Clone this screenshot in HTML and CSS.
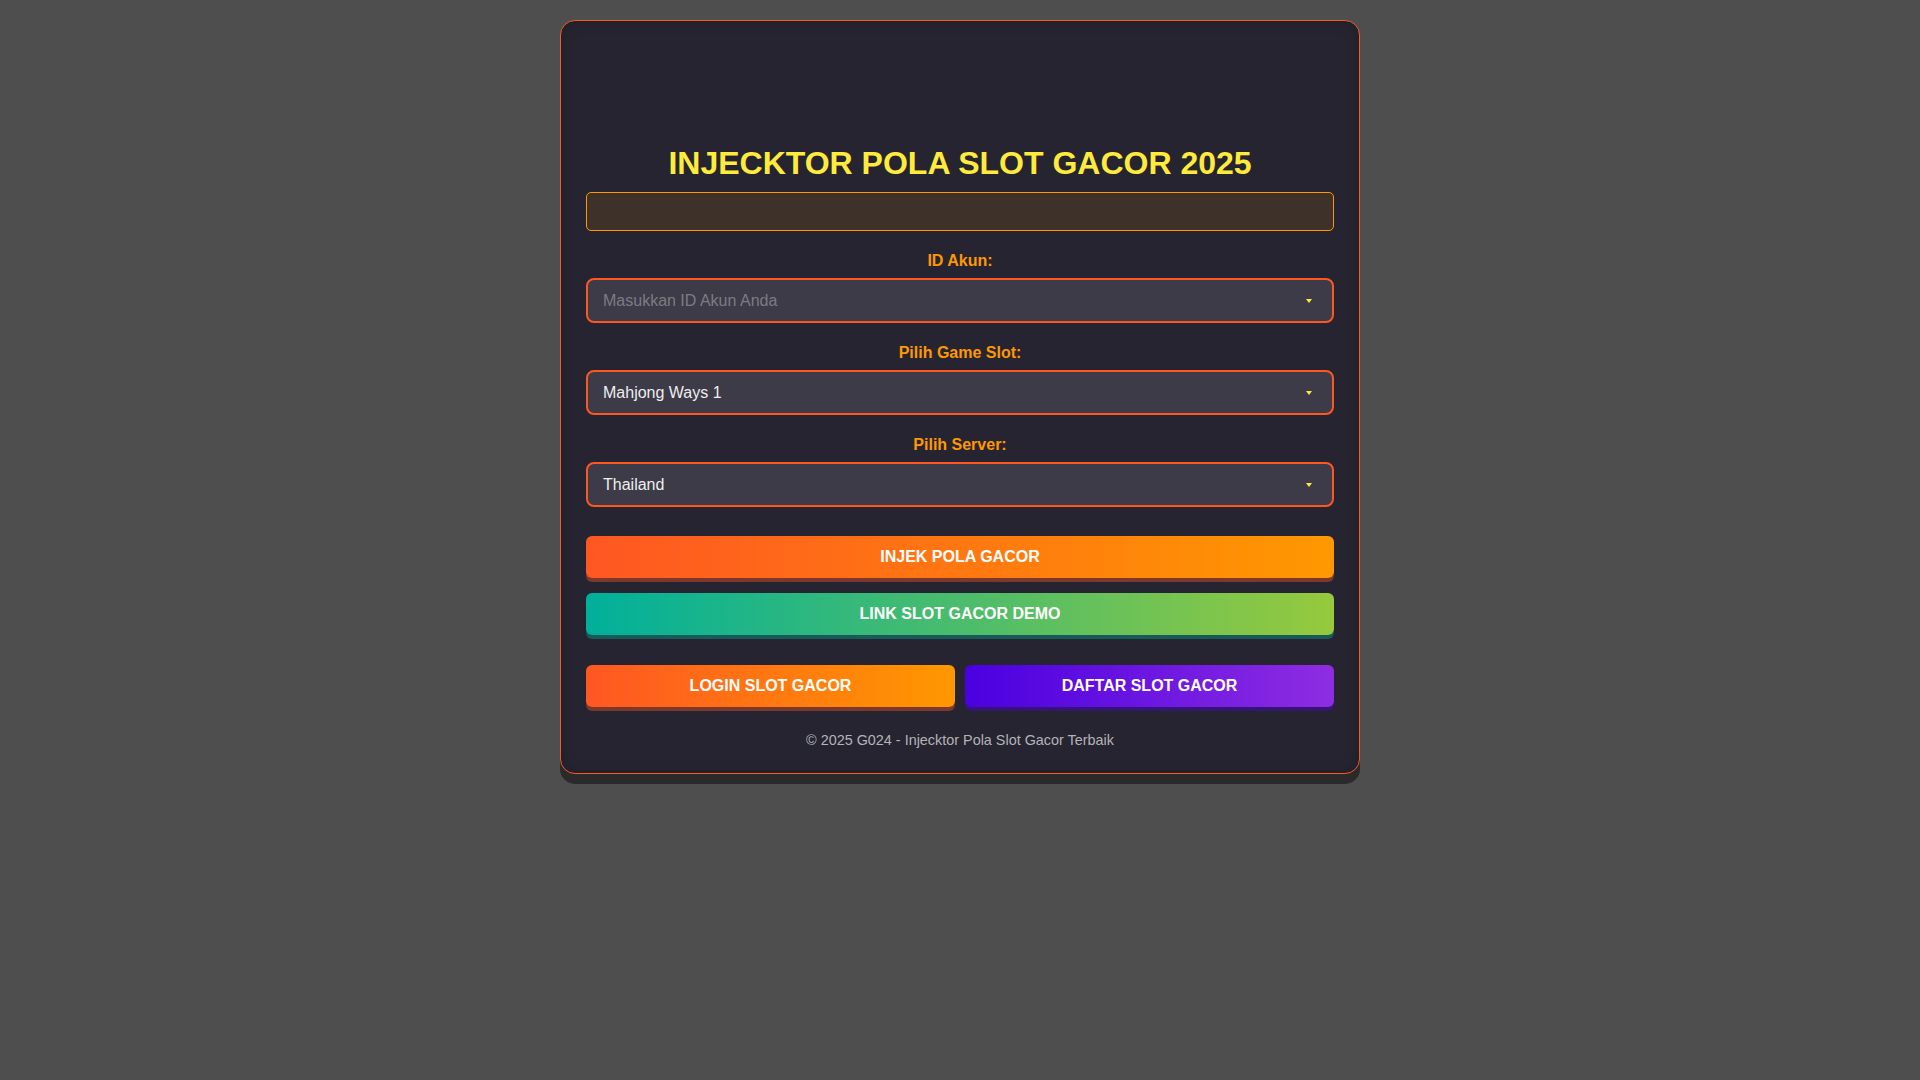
FILE: index.html
```html
<!DOCTYPE html>
<html lang="id">
<head>
<meta charset="utf-8">
<title>Injecktor Pola Slot Gacor 2025</title>
<link rel="stylesheet" href="styles.css">
</head>
<body>
<div class="page">
  <main class="card">
    <div class="logo-space"></div>
    <h1 class="title">INJECKTOR POLA SLOT GACOR 2025</h1>
    <div class="notice"></div>

    <div class="group">
      <label class="label" for="idakun">ID Akun:</label>
      <div class="field">
        <input class="control" id="idakun" type="text" placeholder="Masukkan ID Akun Anda">
      </div>
    </div>

    <div class="group">
      <label class="label" for="game">Pilih Game Slot:</label>
      <div class="field">
        <select class="control" id="game">
          <option>Mahjong Ways 1</option>
        </select>
      </div>
    </div>

    <div class="group">
      <label class="label" for="server">Pilih Server:</label>
      <div class="field">
        <select class="control" id="server">
          <option>Thailand</option>
        </select>
      </div>
    </div>

    <button class="btn btn-orange btn-first" type="button">INJEK POLA GACOR</button>
    <button class="btn btn-green btn-second" type="button">LINK SLOT GACOR DEMO</button>

    <div class="btn-row">
      <button class="btn btn-orange" type="button">LOGIN SLOT GACOR</button>
      <button class="btn btn-purple" type="button">DAFTAR SLOT GACOR</button>
    </div>

    <p class="footer">© 2025 G024 - Injecktor Pola Slot Gacor Terbaik</p>
  </main>
</div>
</body>
</html>
```

FILE: styles.css
```css
* { box-sizing: border-box; }

html, body {
  margin: 0;
  padding: 0;
  background: #4e4e4e;
  font-family: "Liberation Sans", Arial, sans-serif;
}

.page {
  padding: 20px 0;
  display: flex;
  justify-content: center;
}

.card {
  width: 800px;
  background: #262430;
  border: 1px solid #ff5722;
  border-radius: 15px;
  padding: 25px;
  box-shadow: 0 10px 0 rgba(0, 0, 0, 0.45), inset 0 0 14px rgba(0, 0, 0, 0.18);
  display: flex;
  flex-direction: column;
}

.logo-space {
  height: 99px;
}

.title {
  margin: 0;
  font-size: 32px;
  line-height: 37px;
  font-weight: 700;
  color: #ffeb3b;
  text-align: center;
}

.notice {
  margin-top: 10px;
  height: 39px;
  background: #3d3129;
  border: 1px solid #ff9800;
  border-radius: 5px;
}

.group {
  margin-top: 20px;
  display: flex;
  flex-direction: column;
}

.label {
  display: block;
  text-align: center;
  color: #ff9800;
  font-weight: 700;
  font-size: 16px;
  line-height: 19px;
  margin-bottom: 8px;
}

.field {
  position: relative;
}

.field::after {
  content: "";
  position: absolute;
  right: 22px;
  top: 21px;
  width: 0;
  height: 0;
  border-left: 3px solid transparent;
  border-right: 3px solid transparent;
  border-top: 4px solid #ffeb3b;
  pointer-events: none;
}

.control {
  display: block;
  width: 100%;
  height: 45px;
  margin: 0;
  padding: 0 15px;
  background: #3d3b47;
  border: 2px solid #ff5722;
  border-radius: 8px;
  color: #eeeeee;
  font-family: "Liberation Sans", Arial, sans-serif;
  font-size: 16px;
  outline: none;
  -webkit-appearance: none;
  appearance: none;
}

.control::placeholder {
  color: #7c7b82;
}

.btn {
  display: block;
  width: 100%;
  height: 42px;
  margin: 0;
  padding: 0;
  border: none;
  border-radius: 6px;
  color: #ffffff;
  font-family: "Liberation Sans", Arial, sans-serif;
  font-weight: 700;
  font-size: 16px;
  cursor: pointer;
}

.btn-orange {
  background: linear-gradient(90deg, #ff5722, #ff9800);
  box-shadow: 0 4px 0 rgba(255, 87, 34, 0.4);
}

.btn-green {
  background: linear-gradient(90deg, #00b09b, #96c93d);
  box-shadow: 0 4px 0 rgba(0, 176, 155, 0.4);
}

.btn-purple {
  background: linear-gradient(90deg, #4a00e0, #8e2de2);
  box-shadow: 0 4px 0 rgba(74, 0, 224, 0.4);
}

.btn-first {
  margin-top: 29px;
}

.btn-second {
  margin-top: 15px;
}

.btn-row {
  margin-top: 30px;
  display: grid;
  grid-template-columns: 1fr 1fr;
  gap: 10px;
}

.footer {
  margin: 25px 0 0;
  text-align: center;
  color: #b3b3b8;
  font-size: 14.4px;
  line-height: 16px;
}
```
